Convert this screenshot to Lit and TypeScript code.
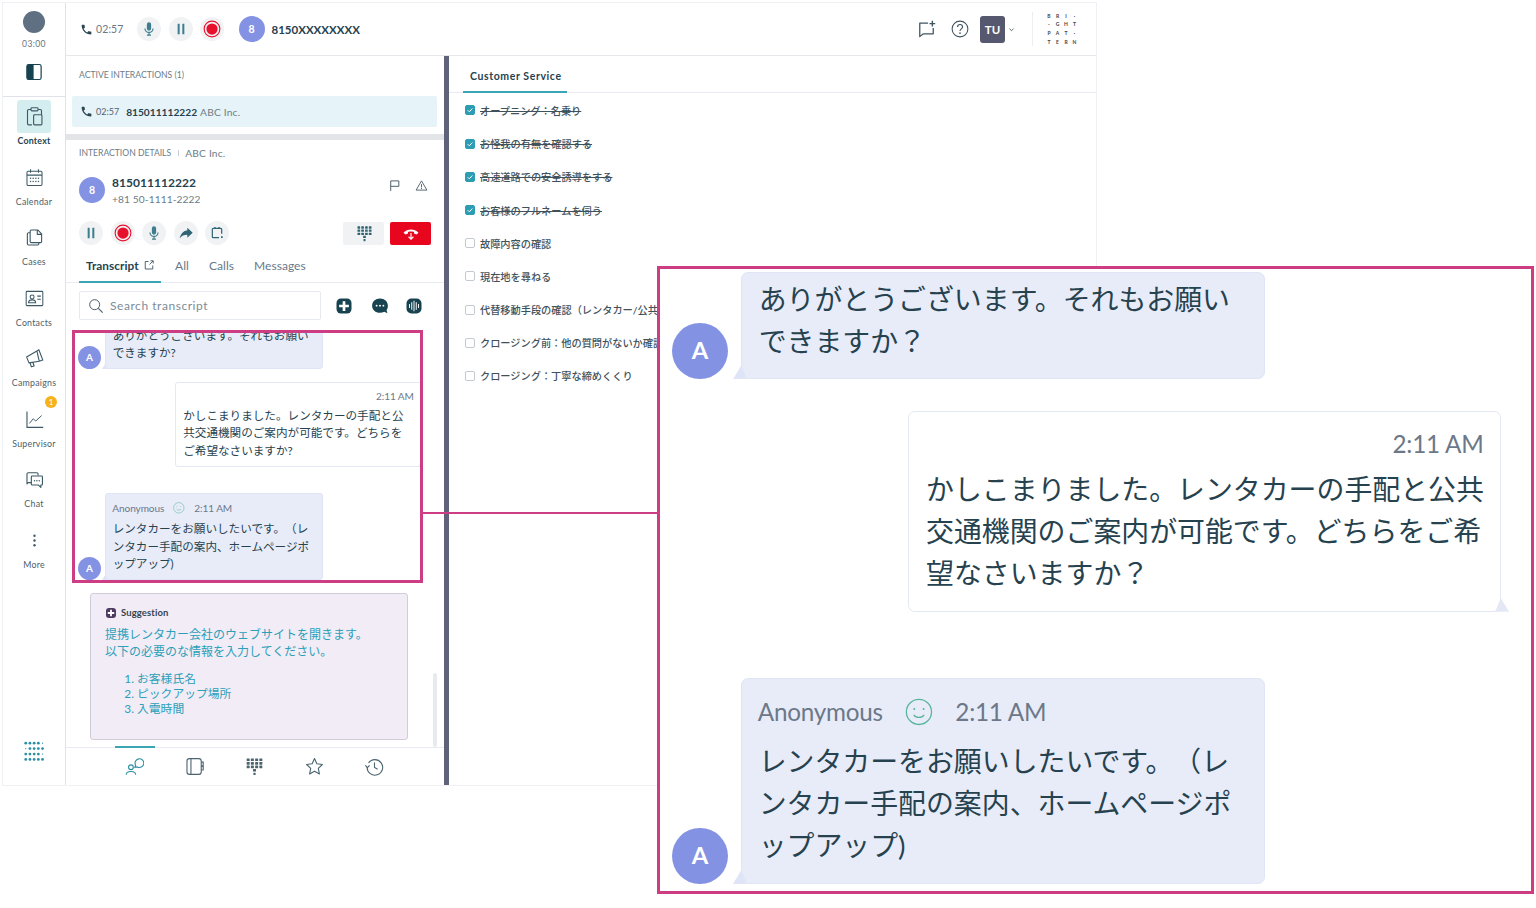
import { LitElement, html, css, svg } from "lit";
import { customElement, property } from "lit/decorators.js";

const PHONE = svg`<path fill="currentColor" d="M6.6 10.8c1.4 2.8 3.8 5.1 6.6 6.6l2.2-2.2c.3-.3.7-.4 1-.2 1.1.4 2.3.6 3.6.6.6 0 1 .4 1 1V20c0 .6-.4 1-1 1C10.6 21 3 13.4 3 4c0-.6.4-1 1-1h3.5c.6 0 1 .4 1 1 0 1.3.2 2.5.6 3.6.1.3 0 .7-.2 1z"/>`;
const MIC = svg`<path fill="currentColor" d="M12 14.500a3.200 3.200 0 0 0 3.200-3.200V5.200a3.200 3.200 0 0 0-6.400 0v6.100a3.200 3.200 0 0 0 3.200 3.200z"/><path fill="none" stroke="currentColor" stroke-width="1.800" d="M6 11.200a6 6 0 0 0 12 0M12 17.200V21M9 21.200h6"/>`;
const PAUSE = svg`<path fill="currentColor" d="M7 4h3v16H7zM14 4h3v16h-3z"/>`;
const RECORD = svg`<circle cx="12" cy="12" r="10.500" fill="none" stroke="#e8112d" stroke-width="1.500"/><circle cx="12" cy="12" r="7.500" fill="#e8112d"/>`;
const FORWARD = svg`<path fill="currentColor" d="M14 8V4l8 7.500-8 7.500v-4.200c-5 0-8.600 1.600-11.500 5.200C3.800 15 6.800 9.200 14 8z"/>`;
const TRANSFER = svg`<path fill="none" stroke="currentColor" stroke-width="1.800" d="M19 13V6.500A1.500 1.500 0 0 0 17.500 5h-11A1.500 1.500 0 0 0 5 6.500v11A1.500 1.500 0 0 0 6.500 19H15"/><path fill="currentColor" d="M18 17h2.500v2.500H18zM8 3h2v3H8zM14 3h2v3h-2z"/>`;
const KEYPAD = svg`${[3.500, 8, 12.500].map((y) => [4, 9.300, 14.700, 20].map((x) => svg`<rect x=${x - 1.900} y=${y - 1.700} width="3.800" height="3.400" rx=".5" fill="currentColor"/>`))}<rect x="10.100" y="15" width="3.800" height="3.400" rx=".5" fill="currentColor"/><rect x="10.600" y="19.800" width="2.800" height="3" rx=".5" fill="currentColor"/>`;
const HANGUP = svg`<path fill="#fff" d="M2 11.500C7.500 6 16.500 6 22 11.500l-2.700 2.600-3.300-1.400v-2.200c-2.600-.8-5.400-.8-8 0v2.200l-3.300 1.400z"/><path fill="none" stroke="#fff" stroke-width="1.500" d="M12 12v8M8.800 17l3.200 3.200 3.200-3.200"/>`;
const EXTERNAL = svg`<path fill="none" stroke="currentColor" stroke-width="1.900" d="M11 5H4.500v15h15v-7M13 11l7-7M15 3.500h5.500V9"/>`;
const SEARCH = svg`<circle cx="10" cy="10" r="7.500" fill="none" stroke="currentColor" stroke-width="1.500"/><path stroke="currentColor" stroke-width="1.700" d="M15.500 15.500l6.500 6.500"/>`;
const PLUSBOX = svg`<rect x="2" y="2" width="20" height="20" rx="6" fill="currentColor"/><path fill="#fff" d="M10.200 5.500h3.600v4.700h4.700v3.600h-4.700v4.700h-3.600v-4.700H5.500v-3.600h4.700z"/>`;
const CHATDOTS = svg`<path fill="currentColor" d="M12 2C6 2 1.500 6.200 1.500 11.500S6 21 12 21c2.200 0 4-.5 5.700-1.400l4.300 2.200-1.300-4.300c1.200-1.600 1.800-3.700 1.800-6C22.500 6.200 18 2 12 2z"/><circle cx="7.500" cy="11.500" r="1.300" fill="#fff"/><circle cx="12" cy="11.500" r="1.300" fill="#fff"/><circle cx="16.500" cy="11.500" r="1.300" fill="#fff"/>`;
const WAVE = svg`<rect x="2" y="2" width="20" height="20" rx="6.500" fill="currentColor"/><path stroke="#fff" stroke-width="1.300" stroke-linecap="round" d="M6 10v4M9 7.500v9M12 5.500v13M15 7.500v9M18 10v4"/>`;
const FLAG = svg`<path fill="none" stroke="currentColor" stroke-width="1.800" d="M5 22V3.500h15v10H5"/>`;
const WARN = svg`<path fill="none" stroke="currentColor" stroke-width="1.700" stroke-linejoin="round" d="M12 3.500L22 20.500H2z"/><path stroke="currentColor" stroke-width="1.700" d="M12 9.500v6M12 16.500v2"/>`;
const NOTE = svg`<path fill="none" stroke="currentColor" stroke-width="1.600" stroke-linejoin="round" d="M14 4H3.500v17l4.500-3.500h12.500V10"/><path fill="currentColor" d="M18.500 1h1.800v2.700H23v1.800h-2.700v2.700h-1.800V5.500h-2.700V3.700h2.700z"/>`;
const HELP = svg`<circle cx="12" cy="12" r="10.500" fill="none" stroke="currentColor" stroke-width="1.400"/><path fill="none" stroke="currentColor" stroke-width="1.500" d="M8.700 9.200c0-4.300 6.700-4.300 6.700 0 0 2.700-3.400 2.600-3.400 5.500"/><circle cx="12" cy="17.500" r="1.100" fill="currentColor"/>`;
const CHEV = svg`<path fill="none" stroke="currentColor" stroke-width="3" d="M5 9l7 7 7-7"/>`;
const PANEL = svg`<rect x="2.500" y="2" width="19" height="20" rx="2.500" fill="#fff" stroke="#17424f" stroke-width="1.600"/><path fill="#17424f" d="M5 2h6.500v20H5a2.500 2.500 0 0 1-2.500-2.500v-15A2.500 2.500 0 0 1 5 2z"/>`;
const CONTEXT = svg`<g fill="none" stroke="currentColor" stroke-width="1.300"><path d="M8 4H5.500A1.500 1.500 0 0 0 4 5.500V20a1.500 1.500 0 0 0 1.500 1.500H9M16 4h2.500A1.500 1.500 0 0 1 20 5.500V10"/><rect x="8" y="2" width="8" height="3.500" rx="1"/><rect x="11" y="10" width="9.500" height="11.500" rx="1"/></g>`;
const CALENDAR = svg`<g fill="none" stroke="currentColor" stroke-width="1.300"><rect x="2.500" y="4" width="19" height="18" rx="1.500"/><path d="M2.500 9h19M7 1.500V6M17 1.500V6"/></g><g fill="currentColor">${[13, 17].map((y) => [7, 10.300, 13.700, 17].map((x) => svg`<rect x=${x - .8} y=${y - .8} width="1.600" height="1.600"/>`))}</g>`;
const CASES = svg`<g fill="none" stroke="currentColor" stroke-width="1.400" stroke-linejoin="round"><path d="M8 2.500h8l5 5V17a1.500 1.500 0 0 1-1.500 1.500H8A1.500 1.500 0 0 1 6.500 17V4A1.500 1.500 0 0 1 8 2.500zM15.500 2.500V8H21"/><path d="M6.500 6H4.500A1.500 1.500 0 0 0 3 7.500V20a1.500 1.500 0 0 0 1.500 1.500H16a1.500 1.500 0 0 0 1.500-1.500v-1.500"/></g>`;
const CONTACTS = svg`<g fill="none" stroke="currentColor" stroke-width="1.300"><rect x="1.500" y="3" width="21" height="18" rx="1"/><circle cx="9" cy="10" r="2.500"/><path d="M4.500 17.500c0-5 9-5 9 0zM15.500 9H20M15.500 13H20"/></g>`;
const CAMPAIGN = svg`<g fill="none" stroke="currentColor" stroke-width="1.400" stroke-linejoin="round"><path d="M2 10l13-7.500 3 13-13 2zM15 2.500l2.500-1.500 5 13-4.500 1.500M6.500 17.500l1.500 5 3.500-1-1.500-4.500"/></g>`;
const CHART = svg`<path fill="none" stroke="currentColor" stroke-width="1.400" d="M2.500 2v20H23"/><path fill="none" stroke="currentColor" stroke-width="1.200" d="M5.500 17l5-6 3 3 7.500-7"/>`;
const CHAT = svg`<g fill="none" stroke="currentColor" stroke-width="1.400" stroke-linejoin="round"><path d="M8 16H4l-1.500 1.500V5a1.500 1.500 0 0 1 1.500-1.500h11A1.500 1.500 0 0 1 16.500 5v2"/><path d="M8 8.500a1 1 0 0 1 1-1h12a1 1 0 0 1 1 1V18a1 1 0 0 1-1 1h-1v3l-3-3H9a1 1 0 0 1-1-1z"/></g><g fill="currentColor"><circle cx="12" cy="13.500" r=".9"/><circle cx="15" cy="13.500" r=".9"/><circle cx="18" cy="13.500" r=".9"/></g>`;
const MORE = svg`<g fill="currentColor"><circle cx="12" cy="6" r="1.500"/><circle cx="12" cy="12" r="1.500"/><circle cx="12" cy="18" r="1.500"/></g>`;
const GRID = svg`<g fill="currentColor">${[0, 1, 2, 3].map((r) => [0, 1, 2, 3, 4].map((c) => svg`<circle cx=${2 + c * 4.800} cy=${2.500 + r * 6.200} r=${(r === 0 && c === 4) || (r === 1 && c === 0) || (r === 2 && c === 4) ? .7 : 1.600}/>`))}</g>`;
const AGENT = svg`<g fill="none" stroke="currentColor" stroke-width="1.400"><circle cx="7.500" cy="13" r="3"/><path d="M1.500 22.500c0-5.500 12-5.500 12 0"/><path d="M12.500 13l1-2.500a5.500 5.500 0 1 1 2 2z"/></g>`;
const BOOK = svg`<g fill="none" stroke="currentColor" stroke-width="1.400"><rect x="2.500" y="2" width="18" height="20" rx="3"/><path d="M7.500 2v20M20.500 6.500H23v4.500h-2.500M20.500 12H23v4.500h-2.500"/></g>`;
const STAR = svg`<path fill="none" stroke="currentColor" stroke-width="1.400" stroke-linejoin="round" d="M12 2l3 6.500 7 1-5.200 4.900 1.400 7-6.200-3.500-6.200 3.500 1.400-7L2 9.500l7-1z"/>`;
const HISTORY = svg`<g fill="none" stroke="currentColor" stroke-width="1.400"><path d="M4.500 7.500A9.800 9.800 0 1 1 2.700 13"/><path d="M.5 10.500l2.500 3 2.800-3M12 7v6.200l4 2.400"/></g>`;
const SMILE = svg`<circle cx="12" cy="12" r="10.800" fill="none" stroke="#57b59b" stroke-width="1.100"/><circle cx="8" cy="9.500" r=".9" fill="#57b59b"/><circle cx="16" cy="9.500" r=".9" fill="#57b59b"/><path fill="none" stroke="#57b59b" stroke-width="1.100" d="M7.500 14.500c2 3 7 3 9 0"/>`;

@customElement("chat-thread")
class ChatThread extends LitElement {
  @property({ type: Array }) first: string[] = [];
  @property({ type: Array }) second: string[] = [];
  @property({ type: Array }) third: string[] = [];
  static styles = css`
    :host { display: flex; flex-direction: column; justify-content: flex-end; overflow: hidden;
      font-family: Lato, "Noto Sans CJK JP", sans-serif; color: #26424f; line-height: 1.505; text-spacing-trim: space-all; }
    .row { display: flex; align-items: flex-end; flex: none; padding-left: var(--pad, .5em); gap: var(--gap, .4em); }
    .row + .row { margin-top: 1.15em; }
    .row.after-out { margin-top: var(--after-out, 2.37em); }
    .avatar { width: 2em; height: 2em; border-radius: 50%; background: #8492e3; color: #fff; font-weight: 700;
      display: flex; align-items: center; justify-content: center; flex: none; }
    .avatar span { font-size: .85em; }
    .bubble { position: relative; flex: none; box-sizing: border-box; width: 18.78em; padding: .22em .6em .56em;
      background: #e8ecf9; border: 1px solid #e0e5f5; border-radius: .25em; white-space: nowrap; }
    .bubble::after { content: ""; position: absolute; left: -.32em; bottom: -1px; width: .5em; height: .5em;
      background: #dfe4f6; clip-path: polygon(60% 0, 100% 100%, 0 100%); }
    .out { padding-left: 0; margin-left: 8.9em; }
    .out .bubble { width: 21.25em; background: #fff; border-color: #e4e8f4; padding-top: .4em; }
    .out .bubble::after { left: auto; right: -.32em; background: #e4e8f4; clip-path: polygon(40% 0, 100% 100%, 0 100%); }
    .bubble.in-head { padding-top: .45em; }
    .time { font-size: .87em; line-height: 1.73; color: #6c7888; letter-spacing: -.01em; text-align: right; margin-bottom: .16em; }
    .head { display: flex; align-items: center; gap: .8em; height: 1.5em; margin-bottom: .29em; margin-left: -.03em; }
    .head span { font-size: .87em; color: #6c7888; letter-spacing: -.01em; }
    .head svg { width: 1em; height: 1em; flex: none; }
  `;
  render() {
    const lines = (l: string[]) => l.map((t) => html`<div>${t}</div>`);
    const avatar = html`<div class="avatar"><span>A</span></div>`;
    return html`
      <div class="row">${avatar}<div class="bubble">${lines(this.first)}</div></div>
      <div class="row out"><div class="bubble"><div class="time">2:11 AM</div>${lines(this.second)}</div></div>
      <div class="row after-out">${avatar}<div class="bubble in-head">
        <div class="head"><span>Anonymous</span><svg viewBox="0 0 24 24">${SMILE}</svg><span>2:11 AM</span></div>
        ${lines(this.third)}</div></div>`;
  }
}

const SMALL = {
  first: ["ありがとうございます。それもお願い", "できますか?"],
  second: ["かしこまりました。レンタカーの手配と公", "共交通機関のご案内が可能です。どちらを", "ご希望なさいますか?"],
  third: ["レンタカーをお願いしたいです。（レ", "ンタカー手配の案内、ホームページポ", "ップアップ)"],
};
const LARGE = {
  first: ["ありがとうございます。それもお願い", "できますか？"],
  second: ["かしこまりました。レンタカーの手配と公共", "交通機関のご案内が可能です。どちらをご希", "望なさいますか？"],
  third: SMALL.third,
};

const NAV = [
  ["Context", CONTEXT], ["Calendar", CALENDAR], ["Cases", CASES], ["Contacts", CONTACTS],
  ["Campaigns", CAMPAIGN], ["Supervisor", CHART], ["Chat", CHAT], ["More", MORE],
] as const;

const CHECKS: [string, boolean][] = [
  ["オープニング：名乗り", true], ["お怪我の有無を確認する", true], ["高速道路での安全誘導をする", true],
  ["お客様のフルネームを伺う", true], ["故障内容の確認", false], ["現在地を尋ねる", false],
  ["代替移動手段の確認（レンタカー/公共交通機関）", false], ["クロージング前：他の質問がないか確認", false], ["クロージング：丁寧な締めくくり", false],
];

@customElement("app-root")
class AppRoot extends LitElement {
  static styles = css`
    :host { display: block; position: relative; width: 1536px; height: 908px; overflow: hidden; background: #fff;
      font-family: Lato, "Noto Sans CJK JP", sans-serif; color: #26424f; text-spacing-trim: space-all; }
    svg { display: block; flex: none; }
    .frame { display: flex; box-sizing: border-box; width: 1093px; height: 782px; margin: 3px 0 0 3px;
      box-shadow: 0 0 0 1px #f0f1f4; }
    .side { width: 63px; flex: none; box-sizing: border-box; border-right: 1px solid #dfe2e7; display: flex; flex-direction: column; align-items: center; }
    .side-top { width: 100%; height: 94px; flex: none; border-bottom: 1px solid #dfe2e7; display: flex; flex-direction: column; align-items: center; box-sizing: border-box; padding-top: 8px; }
    .status { width: 22px; height: 22px; border-radius: 50%; background: #5f7082; }
    .t300 { font-size: 8.500px; color: #66757f; margin-top: 6px; letter-spacing: .4px; line-height: 10px; }
    .panel { width: 18px; height: 18px; margin-top: 14px; }
    .nav { margin-top: 3px; display: flex; flex-direction: column; width: 100%; align-items: center; }
    .item { height: 60.500px; width: 100%; display: flex; flex-direction: column; align-items: center; position: relative; flex: none; }
    .ibox { width: 34px; height: 33px; border-radius: 3px; display: flex; align-items: center; justify-content: center; color: #3c5965; }
    .ibox svg { width: 19px; height: 19px; }
    .item.on .ibox { background: #d4eef0; }
    .item.on .ibox svg { width: 21px; height: 21px; }
    .lab { font-size: 8.800px; line-height: 10px; margin-top: 3px; color: #4b5e6a; letter-spacing: .25px; }
    .item.on .lab { font-weight: 700; color: #26424f; }
    .badge { position: absolute; left: 42px; top: -7px; width: 12px; height: 12px; border-radius: 50%; background: #f6b21b; color: #fff; font-size: 8px; line-height: 12px; text-align: center; }
    .grid { margin-top: auto; margin-bottom: 23px; width: 21px; height: 21px; color: #2e8fa4; }

    .main { flex: 1; display: flex; flex-direction: column; min-width: 0; }
    .top { height: 53px; flex: none; box-sizing: border-box; border-bottom: 1px solid #e6e8ec; display: flex; align-items: center; padding-left: 14px; }
    .ph { width: 13px; height: 13px; color: #2c4652; }
    .calltime { font-size: 10.500px; color: #6a7a85; margin-left: 3px; letter-spacing: .1px; }
    .circ { width: 24px; height: 24px; border-radius: 50%; background: #f0f2f4; display: flex; align-items: center; justify-content: center; flex: none; color: #3d7d8d; }
    .circ svg { width: 16px; height: 16px; }
    .circ.rec svg { width: 18px; height: 18px; }
    .circ.dark { color: #2f6473; }
    .mini { width: 26px; height: 26px; border-radius: 50%; background: #8492e3; color: #fff; font-weight: 700; font-size: 10.500px; display: flex; align-items: center; justify-content: center; flex: none; }
    .dial { font-size: 11.500px; font-weight: 700; margin-left: 7px; }
    .topright { margin-left: auto; display: flex; align-items: center; color: #3f5560; padding-right: 16px; }
    .tu { width: 25px; height: 27px; background: #55586e; border-radius: 3px; color: #fff; font-weight: 700; font-size: 11.500px; display: flex; align-items: center; justify-content: center; margin-left: 11px; }
    .logo { margin-left: 17px; border-left: 1px solid #eceef1; padding-left: 13px; font-size: 5px; font-weight: 700; line-height: 8.700px; color: #3c4248; display: grid; grid-template-columns: repeat(4, 8.500px); }
    .logo span { text-align: center; width: 6px; }

    .body { flex: 1; display: flex; min-height: 0; }
    .left { width: 378px; flex: none; display: flex; flex-direction: column; border-right: 5px solid #5f6279; box-sizing: content-box; }
    .cap { font-size: 8.600px; line-height: 12px; color: #6d7c87; }
    .active { height: 78px; box-sizing: border-box; padding: 13px 7px 0 6px; flex: none; }
    .active .cap { margin-left: 7px; }
    .irow { height: 31px; margin-top: 15px; background: #e6f3f9; border-radius: 2px; display: flex; align-items: center; padding-left: 8px; font-size: 10.200px; }
    .irow .ph { margin-right: 3px; }
    .irow b { margin-left: 7px; }
    .irow i { font-style: normal; color: #6d7c87; margin-left: 3px; letter-spacing: .2px; }
    .irow .t { font-size: 9px; color: #52636e; }
    .sep { height: 6px; background: #e2e4e8; flex: none; }
    .details { padding: 7px 13px 0; flex: none; }
    .details .cap { display: flex; align-items: center; }
    .details .cap i { font-style: normal; width: 1px; height: 6px; background: #c6ccd2; margin: 0 6.500px; }
    .details .cap span { font-size: 10.200px; letter-spacing: .2px; }
    .person { display: flex; align-items: center; margin-top: 18px; height: 26px; }
    .pname { margin-left: 7px; line-height: 1; margin-top: 1px; }
    .pname b { display: block; font-size: 12px; letter-spacing: .05px; }
    .pname span { display: block; font-size: 10.200px; color: #6d7c87; margin-top: 5px; letter-spacing: .1px; }
    .pacts { margin-left: auto; display: flex; gap: 14px; color: #4b5e6a; margin-right: 3px; margin-top: -10px; }
    .pacts svg { width: 13px; height: 13px; }
    .ctrl { display: flex; align-items: center; gap: 7.500px; margin-top: 18px; height: 24px; }
    .kbtn { margin-left: auto; width: 41px; height: 23px; background: #f0f2f4; display: flex; align-items: center; justify-content: center; color: #2f6473; border-radius: 2px; padding-left: 1px; box-sizing: border-box; }
    .kbtn svg { width: 17px; height: 17px; }
    .endbtn { width: 41px; height: 23px; background: #e8061f; display: flex; align-items: center; justify-content: center; border-radius: 2px; margin-left: -1.500px; }
    .endbtn svg { width: 18px; height: 18px; }
    .tabs { display: flex; height: 38px; flex: none; border-bottom: 1px solid #e8ecf2; padding-left: 13px; box-sizing: border-box; align-items: stretch; }
    .tab { font-size: 12px; color: #68798a; display: flex; align-items: center; letter-spacing: .05px; margin-right: 20px; padding-top: 4px; }
    .tab.sel { color: #26424f; font-weight: 700; width: 82px; box-sizing: border-box; padding-left: 7px; gap: 4px; border-bottom: 2px solid #3ba5b5; margin-bottom: -1px; margin-right: 14px; font-size: 11.800px; }
    .tab.sel svg { width: 12px; height: 12px; color: #4b5e6a; }
    .tools { display: flex; align-items: center; height: 29px; flex: none; padding-left: 13px; margin-top: 8px; }
    .search { width: 242px; height: 29px; box-sizing: border-box; border: 1px solid #e6e9ee; border-radius: 2px; display: flex; align-items: center; padding-left: 8px; gap: 6px; font-size: 12px; color: #7d8b97; letter-spacing: .55px; }
    .search svg { width: 16px; height: 16px; color: #4b5e6a; }
    .tools .tb { color: #17424f; width: 18px; height: 18px; }
    .scroll { flex: 1; min-height: 0; position: relative; display: flex; flex-direction: column; margin-top: 10px; }
    chat-thread { font-size: 11.600px; height: 252px; box-sizing: border-box; padding-bottom: 2px; margin-left: 6px; width: 350px; flex: none; --after-out: calc(2.37em - 1px); --gap: .32em; }
    .sug { margin: 11px 0 0 24px; width: 318px; height: 147px; box-sizing: border-box; background: #f2ecf7; border: 1px solid #d2cbd9; border-radius: 3px; padding: 13px 14px; flex: none; color: #2ba0b8; font-size: 12px; line-height: 17px; }
    .sug-h { display: flex; align-items: center; gap: 4px; font-size: 9.500px; font-weight: 700; color: #38444d; height: 12px; line-height: 12px; margin-bottom: 7px; letter-spacing: .1px; }
    .sug-h svg { width: 12px; height: 12px; color: #4d3a5e; }
    .sug ol { margin: 11px 0 0; padding-left: 32px; line-height: 15px; font-size: 11.800px; }
    .scrollbar { position: absolute; right: 7px; bottom: 0; width: 4px; height: 74px; background: #e8eaee; border-radius: 2px; }
    .bnav { height: 38px; flex: none; border-top: 1px solid #e8ecf2; display: flex; box-sizing: border-box; padding-left: 48.500px; gap: 19.500px; align-items: center; }
    .bitem { width: 40.500px; height: 38px; display: flex; align-items: center; justify-content: center; color: #4b6470; box-sizing: border-box; flex: none; }
    .bitem svg { width: 19px; height: 19px; }
    .bitem.sel { border-top: 2px solid #3ba5b5; margin-top: -2px; height: 40px; color: #2e8fa4; }

    .right { flex: 1; display: flex; flex-direction: column; min-width: 0; }
    .rtabs { height: 37px; flex: none; border-bottom: 1px solid #e8ecf2; padding-left: 14px; box-sizing: border-box; display: flex; }
    .rtab { width: 104px; box-sizing: border-box; padding-left: 7px; padding-top: 4px; font-size: 10.500px; font-weight: 700; letter-spacing: .6px; display: flex; align-items: center; border-bottom: 2px solid #3ba5b5; margin-bottom: -1px; }
    .checks { padding: .900px 0 0 16px; }
    .check { height: 33.200px; display: flex; align-items: center; font-size: 10.200px; font-weight: 500; color: #3f525c; white-space: nowrap; }
    .box { width: 10px; height: 10px; box-sizing: border-box; border: 1px solid #c3cad1; border-radius: 2px; margin-right: 5px; flex: none; }
    .check.done .box { background: #2c9db3; border-color: #2c9db3; display: flex; align-items: center; justify-content: center; }
    .check.done .box svg { width: 8px; height: 8px; }
    .check.done span { text-decoration: line-through; }

    .mark { position: absolute; box-sizing: border-box; border: 3px solid #cc3d83; pointer-events: none; }
    .mark.small { left: 72px; top: 330px; width: 351px; height: 253px; }
    .link { position: absolute; left: 423px; top: 512px; width: 234px; height: 2px; background: #cc3d83; }
    .callout { position: absolute; left: 657px; top: 266px; width: 877px; height: 628px; box-sizing: border-box; border: 3px solid #cc3d83; background: #fff; overflow: hidden; }
    .callout chat-thread { font-size: 27.900px; margin: 0; width: 871px; height: 622px; box-sizing: border-box; padding-bottom: 7px; --pad: .43em; --gap: .47em; --after-out: 2.37em; }
  `;

  render() {
    const ic = (p: unknown, cls = "") => html`<svg class=${cls} viewBox="0 0 24 24">${p}</svg>`;
    return html`
      <div class="frame">
        <aside class="side">
          <div class="side-top">
            <div class="status"></div>
            <div class="t300">03:00</div>
            ${ic(PANEL, "panel")}
          </div>
          <nav class="nav">
            ${NAV.map(([name, icon], i) => html`
              <div class="item ${i === 0 ? "on" : ""}">
                <div class="ibox">${ic(icon)}</div>
                <div class="lab">${name}</div>
                ${name === "Supervisor" ? html`<div class="badge">1</div>` : ""}
              </div>`)}
          </nav>
          ${ic(GRID, "grid")}
        </aside>
        <div class="main">
          <header class="top">
            ${ic(PHONE, "ph")}
            <span class="calltime">02:57</span>
            <div class="circ" style="margin-left:13px">${ic(MIC)}</div>
            <div class="circ" style="margin-left:8px">${ic(PAUSE)}</div>
            <div class="circ rec" style="margin-left:7px">${ic(RECORD)}</div>
            <div class="mini" style="margin-left:15px">8</div>
            <span class="dial">8150XXXXXXXX</span>
            <div class="topright">
              <svg viewBox="0 0 24 24" style="width:19px;height:19px">${NOTE}</svg>
              <svg viewBox="0 0 24 24" style="width:18px;height:18px;margin-left:15px">${HELP}</svg>
              <div class="tu">TU</div>
              <svg viewBox="0 0 24 24" style="width:7px;height:7px;margin-left:3px">${CHEV}</svg>
              <div class="logo">${"BRI··GHTPAT·TERN".split("").map((c) => html`<span>${c}</span>`)}</div>
            </div>
          </header>
          <div class="body">
            <section class="left">
              <div class="active">
                <div class="cap">ACTIVE INTERACTIONS (1)</div>
                <div class="irow">${ic(PHONE, "ph")}<span class="t">02:57</span><b>815011112222</b><i>ABC Inc.</i></div>
              </div>
              <div class="sep"></div>
              <div class="details">
                <div class="cap">INTERACTION DETAILS<i></i><span>ABC Inc.</span></div>
                <div class="person">
                  <div class="mini">8</div>
                  <div class="pname"><b>815011112222</b><span>+81 50-1111-2222</span></div>
                  <div class="pacts">${ic(FLAG)}${ic(WARN)}</div>
                </div>
                <div class="ctrl">
                  <div class="circ">${ic(PAUSE)}</div>
                  <div class="circ rec">${ic(RECORD)}</div>
                  <div class="circ">${ic(MIC)}</div>
                  <div class="circ dark">${ic(FORWARD)}</div>
                  <div class="circ dark">${ic(TRANSFER)}</div>
                  <div class="kbtn">${ic(KEYPAD)}</div>
                  <div class="endbtn">${ic(HANGUP)}</div>
                </div>
              </div>
              <div class="tabs">
                <div class="tab sel">Transcript${ic(EXTERNAL)}</div>
                <div class="tab">All</div>
                <div class="tab">Calls</div>
                <div class="tab">Messages</div>
              </div>
              <div class="tools">
                <div class="search">${ic(SEARCH)}Search transcript</div>
                <svg class="tb" style="margin-left:14px" viewBox="0 0 24 24">${PLUSBOX}</svg>
                <svg class="tb" style="margin-left:18px" viewBox="0 0 24 24">${CHATDOTS}</svg>
                <svg class="tb" style="margin-left:16px" viewBox="0 0 24 24">${WAVE}</svg>
              </div>
              <div class="scroll">
                <chat-thread .first=${SMALL.first} .second=${SMALL.second} .third=${SMALL.third}></chat-thread>
                <div class="sug">
                  <div class="sug-h">${ic(PLUSBOX)}Suggestion</div>
                  <div>提携レンタカー会社のウェブサイトを開きます。</div>
                  <div>以下の必要のな情報を入力してください。</div>
                  <ol><li>お客様氏名</li><li>ピックアップ場所</li><li>入電時間</li></ol>
                </div>
                <div class="scrollbar"></div>
              </div>
              <div class="bnav">
                <div class="bitem sel">${ic(AGENT)}</div>
                <div class="bitem">${ic(BOOK)}</div>
                <div class="bitem">${ic(KEYPAD)}</div>
                <div class="bitem">${ic(STAR)}</div>
                <div class="bitem">${ic(HISTORY)}</div>
              </div>
            </section>
            <section class="right">
              <div class="rtabs"><div class="rtab">Customer Service</div></div>
              <div class="checks">
                ${CHECKS.map(([t, done]) => html`
                  <div class="check ${done ? "done" : ""}">
                    <div class="box">${done ? html`<svg viewBox="0 0 24 24"><path fill="none" stroke="#fff" stroke-width="3" d="M5 12.500l5 5 9-10"/></svg>` : ""}</div>
                    <span>${t}</span>
                  </div>`)}
              </div>
            </section>
          </div>
        </div>
      </div>
      <div class="mark small"></div>
      <div class="link"></div>
      <div class="callout">
        <chat-thread .first=${LARGE.first} .second=${LARGE.second} .third=${LARGE.third}></chat-thread>
      </div>
    `;
  }
}
